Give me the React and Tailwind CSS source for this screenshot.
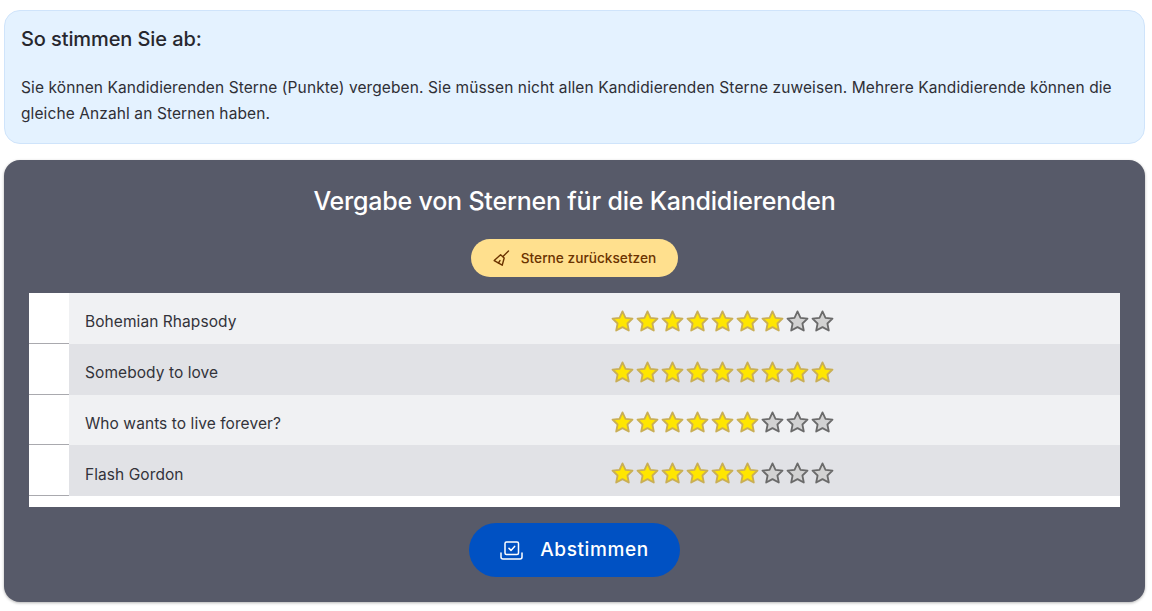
import React from 'react';

const candidates = [
  { name: 'Bohemian Rhapsody', stars: 7 },
  { name: 'Somebody to love', stars: 9 },
  { name: 'Who wants to live forever?', stars: 6 },
  { name: 'Flash Gordon', stars: 6 },
];

const Star = ({ filled }) => (
  <svg width="25" height="24" viewBox="0 0 25 24" className="block shrink-0">
    <path
      d="M12.5 2.4l3 6.4 7 .9-5.1 4.8 1.4 7-6.3-3.4-6.3 3.4 1.4-7-5.1-4.8 7-.9z"
      fill={filled ? '#ffe600' : '#d2d2d2'}
      stroke={filled ? '#c9ae55' : '#6a6a6a'}
      strokeWidth="1.8"
      strokeLinejoin="round"
    />
  </svg>
);

const BroomIcon = () => (
  <svg width="17" height="17" viewBox="0 0 17 17" fill="none" stroke="#6b3300" strokeWidth="1.4" strokeLinejoin="round" strokeLinecap="round">
    <path d="M15.5 1L10 6.4" />
    <path d="M7.6 4.8l3.6 3.2-2 7.2L1.2 10.6z" />
    <path d="M5.4 13l1.6-2.4" />
  </svg>
);

const VoteIcon = () => (
  <svg width="23" height="19" viewBox="0 0 23 19" fill="none" stroke="#ffffff" strokeWidth="1.5" strokeLinejoin="round" strokeLinecap="round">
    <rect x="5" y="1" width="13.5" height="12.5" rx="1.5" />
    <path d="M9 7.4l2 2 3.6-4" />
    <path d="M1 12v4a2 2 0 0 0 2 2h17a2 2 0 0 0 2-2v-4" />
  </svg>
);

const App = () => {
  return (
    <div className="h-[611px] bg-white px-1 pt-2.5 font-['Inter','Liberation_Sans',sans-serif] overflow-hidden">
      {/* Hinweis */}
      <div className="h-[134px] w-[1141px] rounded-2xl border border-[#cfe4fb] bg-[#e4f2ff] px-4 pt-[14px] text-[#27272e]">
        <h2 className="text-[20px] leading-7 font-medium tracking-[-0.1px]">So stimmen Sie ab:</h2>
        <p className="mt-[22px] text-[15.5px] leading-[26px] tracking-[0.1px] text-[#2f2f36]">
          Sie können Kandidierenden Sterne (Punkte) vergeben. Sie müssen nicht allen Kandidierenden Sterne zuweisen. Mehrere Kandidierende können die gleiche Anzahl an Sternen haben.
        </p>
      </div>

      {/* Abstimmung */}
      <div className="mt-4 h-[442px] w-[1141px] rounded-2xl bg-[#575a69] px-[25px] pt-[25px] shadow-[0_1px_3px_rgba(0,0,0,0.3)]">
        <h1 className="text-center text-[25px] leading-8 font-medium tracking-[-0.2px] text-white">
          Vergabe von Sternen für die Kandidierenden
        </h1>
        <div className="mt-[22px] flex justify-center">
          <button className="flex h-[38px] w-[207px] items-center justify-center gap-[11px] rounded-full bg-[#ffe08e] pt-px text-[13.7px] font-medium text-[#6b3300]">
            <BroomIcon />
            Sterne zurücksetzen
          </button>
        </div>

        <div className="mt-4 h-[214px] bg-white">
          {candidates.map((c, i) => (
            <div key={c.name} className="flex h-[50.75px]">
              <div className="w-10 shrink-0 border-b border-[#a9a9ae]" />
              <div className={`flex flex-1 items-center pl-4 pt-[5px] ${i % 2 === 0 ? 'bg-[#f0f1f3]' : 'bg-[#e1e2e6]'}`}>
                <span className="w-[525px] pt-[2px] text-[15.5px] tracking-[0.07px] text-[#33333a]">{c.name}</span>
                <div className="flex">
                  {Array.from({ length: 9 }, (_, n) => (
                    <Star key={n} filled={n < c.stars} />
                  ))}
                </div>
              </div>
            </div>
          ))}
        </div>

        <div className="mt-4 flex justify-center">
          <button className="flex h-[54px] w-[211px] items-center justify-center gap-[17px] rounded-full bg-[#0051c3] text-[19px] font-medium tracking-[0.6px] text-white">
            <VoteIcon />
            Abstimmen
          </button>
        </div>
      </div>
    </div>
  );
};

export default App;
